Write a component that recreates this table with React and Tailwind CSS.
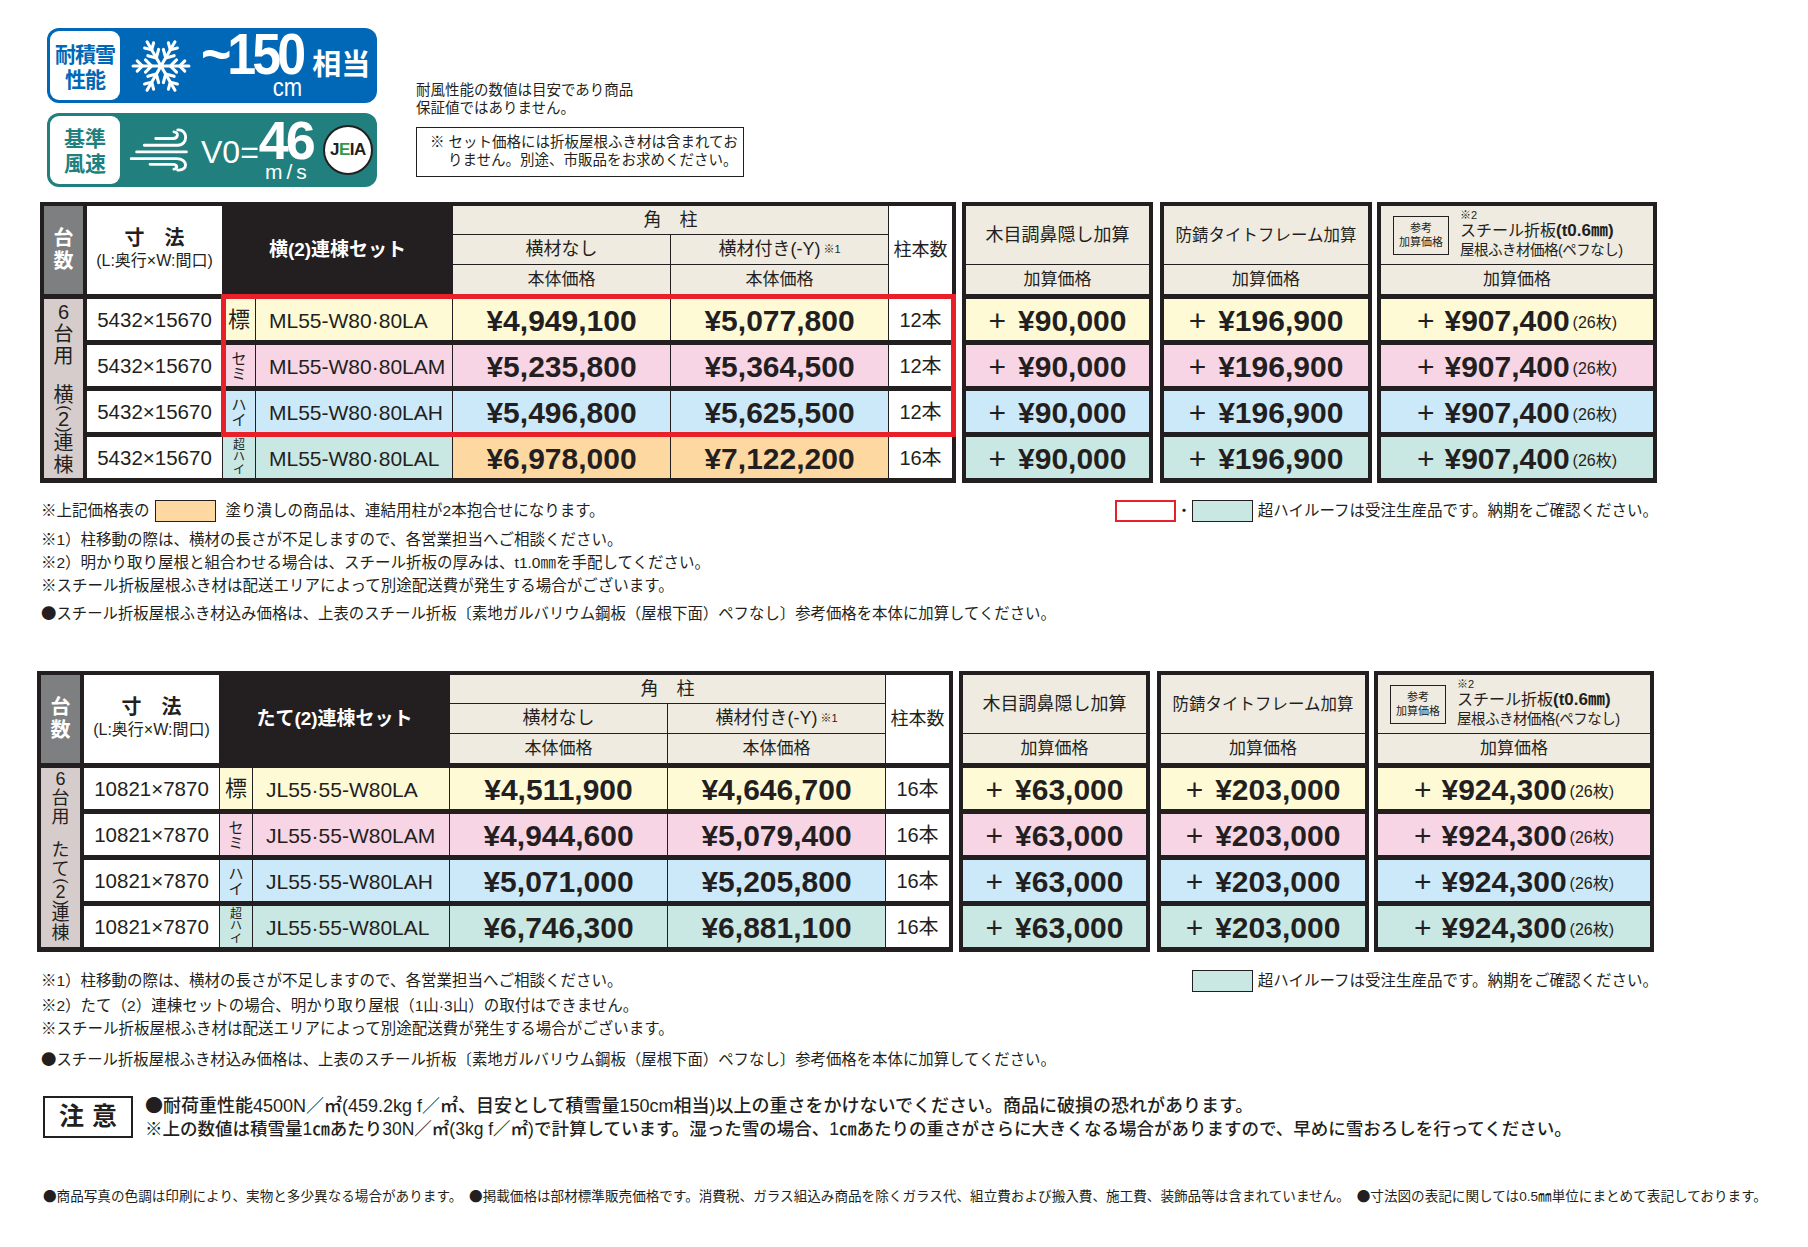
import React from 'react'

const Y = 'bg-[#fffad6]'
const P = 'bg-[#f8d5e5]'
const B = 'bg-[#cce9f9]'
const M = 'bg-[#c9e8e4]'
const O = 'bg-[#fdd8a0]'
const HEAD = 'bg-[#efebe1]'
const COLS = 'grid-cols-[42px_135px_32px_196px_217px_217px_63px]'
const CJK = "font-['Noto_Sans_CJK_JP',sans-serif]"

const rows1 = [
  { size: '5432×15670', tag: '標', model: 'ML55-W80·80LA', p1: '¥4,949,100', p2: '¥5,077,800', n: '12本', bg: Y },
  { size: '5432×15670', tag: 'セミ', model: 'ML55-W80·80LAM', p1: '¥5,235,800', p2: '¥5,364,500', n: '12本', bg: P },
  { size: '5432×15670', tag: 'ハイ', model: 'ML55-W80·80LAH', p1: '¥5,496,800', p2: '¥5,625,500', n: '12本', bg: B },
  { size: '5432×15670', tag: '超ハイ', model: 'ML55-W80·80LAL', p1: '¥6,978,000', p2: '¥7,122,200', n: '16本', bg: M, pbg: O },
]

const rows2 = [
  { size: '10821×7870', tag: '標', model: 'JL55·55-W80LA', p1: '¥4,511,900', p2: '¥4,646,700', n: '16本', bg: Y },
  { size: '10821×7870', tag: 'セミ', model: 'JL55·55-W80LAM', p1: '¥4,944,600', p2: '¥5,079,400', n: '16本', bg: P },
  { size: '10821×7870', tag: 'ハイ', model: 'JL55·55-W80LAH', p1: '¥5,071,000', p2: '¥5,205,800', n: '16本', bg: B },
  { size: '10821×7870', tag: '超ハイ', model: 'JL55·55-W80LAL', p1: '¥6,746,300', p2: '¥6,881,100', n: '16本', bg: M },
]

const rowColors = [Y, P, B, M]

function Snowflake() {
  const arm = (
    <g>
      <line x1="0" y1="-3" x2="0" y2="-27" />
      <polyline points="-6,-15 0,-9 6,-15" />
      <polyline points="-5,-23 0,-18 5,-23" />
    </g>
  )
  return (
    <svg viewBox="-32 -29 64 58" className="w-[68px] h-[60px] ml-[7px] shrink-0" fill="none" stroke="white" strokeWidth="3" strokeLinecap="round" strokeLinejoin="round">
      {[30, 90, 150, 210, 270, 330].map((a) => (
        <g key={a} transform={`rotate(${a})`}>{arm}</g>
      ))}
      <circle cx="0" cy="0" r="3" fill="white" stroke="none" />
    </svg>
  )
}

function Wind() {
  return (
    <svg viewBox="0 -2 64 46" className="w-[63px] h-[44px] ml-[10px] shrink-0" fill="none" stroke="white" strokeWidth="3" strokeLinecap="round">
      <path d="M26 9 H44 C50 9 50 2 45 2" />
      <path d="M14 16 H49 C60 16 60 -1 49 0" />
      <path d="M6 23 H58" />
      <path d="M0 30 H48 C60 30 60 43 49 42" />
      <path d="M20 36 H44 C49 36 49 41 45 41" />
    </svg>
  )
}

function Badges() {
  return (
    <div className="flex flex-col gap-[10px]">
      <div className="w-[330px] h-[75px] rounded-[12px] bg-[#0068b6] p-[3px] flex items-center">
        <div className={`w-[70px] h-[69px] rounded-[9px] bg-white flex items-center justify-center text-center text-[#0068b6] font-bold text-[21px] leading-[25px] tracking-[-1px] ${CJK}`}>
          耐積雪
          <br />
          性能
        </div>
        <Snowflake />
        <div className="ml-[6px] flex flex-col items-end text-white leading-none">
          <span className="text-[52px] font-bold tracking-[-4px] leading-[40px] pr-[3px] scale-y-[1.12] origin-bottom">~150</span>
          <span className="text-[22px] leading-[18px] mt-[1px] mr-[3px] scale-y-[1.2] origin-top">cm</span>
        </div>
        <span className="ml-[7px] text-white font-bold text-[29px] leading-none">相当</span>
      </div>
      <div className="w-[330px] h-[74px] rounded-[12px] bg-[#21807e] p-[3px] flex items-center">
        <div className={`w-[70px] h-[68px] rounded-[9px] bg-white flex items-center justify-center text-center text-[#21807e] font-bold text-[21px] leading-[25px] ${CJK}`}>
          基準
          <br />
          風速
        </div>
        <Wind />
        <span className="ml-[8px] text-white text-[32px] leading-none mt-[4px]">V0=</span>
        <div className="flex flex-col items-center text-white leading-none">
          <span className="text-[54px] font-bold tracking-[-3px] leading-[40px]">46</span>
          <span className="text-[21px] tracking-[4px] leading-[18px] pl-[4px] mt-[3px]">m/s</span>
        </div>
        <div className="ml-[10px] w-[50px] h-[50px] rounded-full bg-white border-2 border-[#231f20] flex items-center justify-center font-bold text-[17px] tracking-[-0.5px]">
          <span>J</span>
          <span className="text-[#2e9a45]">E</span>
          <span>I</span>
          <span>A</span>
        </div>
      </div>
    </div>
  )
}

function Paren() {
  return (
    <span className="flex flex-col items-center leading-none">
      <span className="h-[4px] flex items-center justify-center">
        <span className="inline-block rotate-90 text-[16px]">(</span>
      </span>
      <span className="leading-[18px]">2</span>
      <span className="h-[4px] flex items-center justify-center">
        <span className="inline-block rotate-90 text-[16px]">)</span>
      </span>
    </span>
  )
}

function Tag({ t }) {
  if (t.length === 1) return <span className="text-[22px] leading-none">{t}</span>
  return (
    <span className={`flex flex-col items-center ${t.length === 3 ? 'text-[12px] leading-[12.5px]' : 'text-[15px] leading-[15px]'}`}>
      {[...t].map((c, i) => (
        <span key={i}>{c}</span>
      ))}
    </span>
  )
}

function MainTable({ title, rows, bottom, small, highlight }) {
  return (
    <div className="relative bg-[#231f20] p-[4px] pb-[5px] w-[916px] flex flex-col gap-[5px] shrink-0">
      <div className={`grid ${COLS} grid-rows-[28px_29px_29px] gap-px`}>
        <div className="row-span-3 mr-[3px] bg-[#7e7f81] text-white font-bold text-[20px] leading-[23px] flex flex-col items-center justify-center">
          <span>台</span>
          <span>数</span>
        </div>
        <div className="row-span-3 bg-white flex flex-col items-center justify-center pb-[2px]">
          <span className="text-[20px] leading-[24px] font-bold">寸　法</span>
          <span className="text-[16px] leading-[22px]">(L:奥行×W:間口)</span>
        </div>
        <div className="row-span-3 col-span-2 bg-[#231f20] text-white font-bold text-[19px] flex items-center justify-center">
          {title}
        </div>
        <div className={`col-span-2 ${HEAD} flex items-center justify-center text-[18px]`}>角　柱</div>
        <div className="row-span-3 bg-white flex items-center justify-center text-[18px]">柱本数</div>
        <div className={`${HEAD} flex items-center justify-center text-[18px]`}>横材なし</div>
        <div className={`${HEAD} flex items-center justify-center text-[18px]`}>
          横材付き(-Y)<span className="text-[11px] ml-[3px]">※1</span>
        </div>
        <div className={`${HEAD} flex items-center justify-center text-[17px]`}>本体価格</div>
        <div className={`${HEAD} flex items-center justify-center text-[17px]`}>本体価格</div>
      </div>
      <div className={`grid ${COLS} grid-rows-[41px_41px_41px_41px] gap-x-px gap-y-[5px]`}>
        <div
          className={`row-span-4 mr-[3px] bg-[#d5cccb] flex flex-col items-center overflow-hidden ${
            small ? 'text-[18px] leading-[19px] pt-[2px] gap-[14px]' : 'text-[20px] leading-[22px] pt-[2px] gap-[17px]'
          }`}
        >
          <span className="flex flex-col items-center">
            <span>6</span>
            <span>台</span>
            <span>用</span>
          </span>
          <span className="flex flex-col items-center">
            {bottom.map((c, i) => (c === '(2)' ? <Paren key={i} /> : <span key={i}>{c}</span>))}
          </span>
        </div>
        {rows.map((r, i) => (
          <React.Fragment key={i}>
            <div className="bg-white flex items-center justify-center text-[20.5px] pt-[2px]">{r.size}</div>
            <div className={`${r.bg} flex items-center justify-center`}>
              <Tag t={r.tag} />
            </div>
            <div className={`${r.bg} flex items-center pl-[13px] text-[21px] pt-[2px]`}>{r.model}</div>
            <div className={`${r.pbg || r.bg} flex items-center justify-center font-bold text-[30px] pt-[2px]`}>{r.p1}</div>
            <div className={`${r.pbg || r.bg} flex items-center justify-center font-bold text-[30px] pt-[2px]`}>{r.p2}</div>
            <div className="bg-white flex items-center justify-center text-[20px]">{r.n}</div>
          </React.Fragment>
        ))}
      </div>
      {highlight && (
        <div className="absolute left-[181px] top-[92px] w-[735px] h-[143px] border-[5px] border-[#e8202a] pointer-events-none" />
      )}
    </div>
  )
}

function AddTable({ width, head, price, suffix, gap }) {
  return (
    <div className={`bg-[#231f20] p-[4px] pb-[5px] flex flex-col gap-[5px] shrink-0 ${width}`}>
      <div className="grid grid-rows-[58px_29px] gap-px">
        <div className={`${HEAD} flex items-center justify-center`}>{head}</div>
        <div className={`${HEAD} flex items-center justify-center text-[17px]`}>加算価格</div>
      </div>
      <div className="grid grid-rows-[41px_41px_41px_41px] gap-y-[5px]">
        {rowColors.map((c, i) => (
          <div key={i} className={`${c} flex items-center justify-center pt-[2px]`}>
            <span className="font-normal text-[30px]">+</span>
            <span className={`font-bold text-[30px] ${gap}`}>{price}</span>
            {suffix && <span className="text-[16px] ml-[3px] mt-[4px]">(26枚)</span>}
          </div>
        ))}
      </div>
    </div>
  )
}

function SteelHead() {
  return (
    <div className="w-full flex items-center pl-[12px]">
      <div className="border border-[#231f20] w-[56px] h-[39px] flex flex-col items-center justify-center text-[11px] leading-[14px]">
        <span>参考</span>
        <span>加算価格</span>
      </div>
      <div className="ml-[11px] flex flex-col">
        <span className="text-[11px] leading-[10px]">※2</span>
        <span className="text-[16px] leading-[21px]">
          スチール折板<span className="font-bold text-[17px]">(t0.6㎜)</span>
        </span>
        <span className="text-[14.5px] leading-[19px] tracking-[-0.5px]">屋根ふき材価格(ペフなし)</span>
      </div>
    </div>
  )
}

function TableRow({ main, add, className }) {
  return (
    <div className={`flex ${className}`}>
      {main}
      <div className="ml-[6px]">
        <AddTable width="w-[191px]" head={<span className="text-[18px]">木目調鼻隠し加算</span>} price={add[0]} gap="ml-[12px]" />
      </div>
      <div className="ml-[7px]">
        <AddTable width="w-[212px]" head={<span className="text-[16.5px]">防錆タイトフレーム加算</span>} price={add[1]} gap="ml-[12px]" />
      </div>
      <div className="ml-[5px]">
        <AddTable width="w-[280px]" head={<SteelHead />} price={add[2]} gap="ml-[10px]" suffix />
      </div>
    </div>
  )
}

function Swatch({ cls }) {
  return <span className={`inline-block w-[61px] h-[22px] ${cls}`} />
}

function Dot() {
  return <span className={CJK}>●</span>
}

export default function App() {
  return (
    <div className="w-[1808px] h-[1247px] bg-white text-[#231f20] font-['Liberation_Sans','Noto_Sans_CJK_JP',sans-serif] overflow-hidden">
      <div className="flex pt-[28px] pl-[47px]">
        <Badges />
        <div className="ml-[39px] pt-[53px] text-[14.5px]">
          <div className="leading-[18px]">耐風性能の数値は目安であり商品</div>
          <div className="leading-[18px]">保証値ではありません。</div>
          <div className="mt-[10px] w-[328px] h-[50px] border border-[#231f20] pl-[13px] pt-[5px] leading-[18px]">
            <div>※ セット価格には折板屋根ふき材は含まれてお</div>
            <div className="pl-[18px]">りません。別途、市販品をお求めください。</div>
          </div>
        </div>
      </div>

      <TableRow
        className="ml-[40px] mt-[15px]"
        main={<MainTable title="横(2)連棟セット" rows={rows1} bottom={['横', '(2)', '連', '棟']} highlight />}
        add={['¥90,000', '¥196,900', '¥907,400']}
      />

      <div className="ml-[41px] text-[15.5px]">
        <div className="mt-[16px] w-[1617px] h-[24px] flex items-center justify-between">
          <div className="flex items-center">
            <span>※上記価格表の</span>
            <Swatch cls={`ml-[5px] border-[1.5px] border-[#231f20] ${O}`} />
            <span className="ml-[10px]">塗り潰しの商品は、連結用柱が2本抱合せになります。</span>
          </div>
          <div className="flex items-center">
            <Swatch cls="border-[2.5px] border-[#e8202a]" />
            <span>・</span>
            <Swatch cls={`border-[1.5px] border-[#231f20] ${M}`} />
            <span className="ml-[5px]">超ハイルーフは受注生産品です。納期をご確認ください。</span>
          </div>
        </div>
        <div className="mt-[5px] leading-[23px]">※1）柱移動の際は、横材の長さが不足しますので、各営業担当へご相談ください。</div>
        <div className="leading-[23px]">※2）明かり取り屋根と組合わせる場合は、スチール折板の厚みは、t1.0㎜を手配してください。</div>
        <div className="leading-[23px]">※スチール折板屋根ふき材は配送エリアによって別途配送費が発生する場合がございます。</div>
        <div className="mt-[4px] leading-[23px] text-[15.4px]">
          <Dot />スチール折板屋根ふき材込み価格は、上表のスチール折板〔素地ガルバリウム鋼板（屋根下面）ペフなし〕参考価格を本体に加算してください。
        </div>
      </div>

      <TableRow
        className="ml-[37px] mt-[46px]"
        main={<MainTable title="たて(2)連棟セット" rows={rows2} bottom={['た', 'て', '(2)', '連', '棟']} small />}
        add={['¥63,000', '¥203,000', '¥924,300']}
      />

      <div className="ml-[41px] text-[15.5px]">
        <div className="mt-[17px] w-[1617px] h-[24px] flex items-center justify-between">
          <span>※1）柱移動の際は、横材の長さが不足しますので、各営業担当へご相談ください。</span>
          <div className="flex items-center">
            <Swatch cls={`border-[1.5px] border-[#231f20] ${M}`} />
            <span className="ml-[5px]">超ハイルーフは受注生産品です。納期をご確認ください。</span>
          </div>
        </div>
        <div className="mt-[1px] leading-[23px]">※2）たて（2）連棟セットの場合、明かり取り屋根（1山·3山）の取付はできません。</div>
        <div className="leading-[23px]">※スチール折板屋根ふき材は配送エリアによって別途配送費が発生する場合がございます。</div>
        <div className="mt-[7px] leading-[23px] text-[15.4px]">
          <Dot />スチール折板屋根ふき材込み価格は、上表のスチール折板〔素地ガルバリウム鋼板（屋根下面）ペフなし〕参考価格を本体に加算してください。
        </div>
      </div>

      <div className="ml-[43px] mt-[22px] flex items-center">
        <div className="w-[90px] h-[42px] border-2 border-[#231f20] flex items-center justify-center font-bold text-[25px] tracking-[8px] pl-[8px]">
          注意
        </div>
        <div className="ml-[12px] leading-[23px] font-medium whitespace-nowrap">
          <div className="text-[18px]">
            <Dot />耐荷重性能4500N／㎡(459.2kg f／㎡、目安として積雪量150cm相当)以上の重さをかけないでください。商品に破損の恐れがあります。
          </div>
          <div className="text-[17.5px]">※上の数値は積雪量1㎝あたり30N／㎡(3kg f／㎡)で計算しています。湿った雪の場合、1㎝あたりの重さがさらに大きくなる場合がありますので、早めに雪おろしを行ってください。</div>
        </div>
      </div>

      <div className="ml-[43px] mt-[44px] text-[13.6px] leading-[20px] whitespace-nowrap">
        <Dot />商品写真の色調は印刷により、実物と多少異なる場合があります。　<Dot />掲載価格は部材標準販売価格です。消費税、ガラス組込み商品を除くガラス代、組立費および搬入費、施工費、装飾品等は含まれていません。　<Dot />寸法図の表記に関しては0.5㎜単位にまとめて表記しております。
      </div>
    </div>
  )
}
